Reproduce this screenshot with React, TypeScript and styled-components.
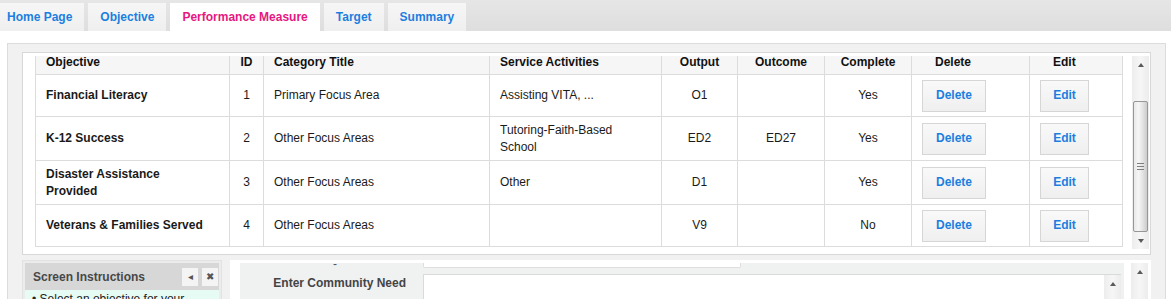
import React from 'react';
import styled, { createGlobalStyle } from 'styled-components';

const border_grey = '#dcdcdc';
const link_blue = '#1c7fe0';
const active_pink = '#e8177f';
const panel_grey = '#f1f1f1';

const GlobalStyle = createGlobalStyle`
  html, body {
    margin: 0;
    padding: 0;
    background: #ffffff;
    font-family: "Liberation Sans", Arial, sans-serif;
    font-size: 12px;
    color: #1a1a1a;
    overflow: hidden;
  }
`;

type Row = {
  objective: string;
  id: number;
  category: string;
  activities: string;
  output: string;
  outcome: string;
  complete: string;
};

const rows: Row[] = [
  { objective: 'Financial Literacy', id: 1, category: 'Primary Focus Area', activities: 'Assisting VITA, ...', output: 'O1', outcome: '', complete: 'Yes' },
  { objective: 'K-12 Success', id: 2, category: 'Other Focus Areas', activities: 'Tutoring-Faith-Based School', output: 'ED2', outcome: 'ED27', complete: 'Yes' },
  { objective: 'Disaster Assistance Provided', id: 3, category: 'Other Focus Areas', activities: 'Other', output: 'D1', outcome: '', complete: 'Yes' },
  { objective: 'Veterans & Families Served', id: 4, category: 'Other Focus Areas', activities: '', output: 'V9', outcome: '', complete: 'No' },
];

const tabs = ['Home Page', 'Objective', 'Performance Measure', 'Target', 'Summary'];

const columns = [
  { title: 'Objective', width: 194, align: 'left' },
  { title: 'ID', width: 34, align: 'center' },
  { title: 'Category Title', width: 226, align: 'left' },
  { title: 'Service Activities', width: 172, align: 'left' },
  { title: 'Output', width: 76, align: 'center' },
  { title: 'Outcome', width: 87, align: 'center' },
  { title: 'Complete', width: 87, align: 'center' },
  { title: 'Delete', width: 118, align: 'left' },
  { title: 'Edit', width: 93, align: 'left' },
];

const Scrollbar = ({ thumbOffset, thumbHeight }: { thumbOffset?: number; thumbHeight?: number }) => (
  <ScrollTrack>
    <ArrowButton>
      <ArrowUp />
    </ArrowButton>
    <ThumbArea>
      {thumbHeight ? (
        <Thumb style={{ marginTop: thumbOffset, height: thumbHeight }}>
          <Grip />
          <Grip />
          <Grip />
        </Thumb>
      ) : null}
    </ThumbArea>
    {thumbHeight ? (
      <ArrowButton>
        <ArrowDown />
      </ArrowButton>
    ) : null}
  </ScrollTrack>
);

export default function App() {
  return (
    <>
      <GlobalStyle />
      <TabBar>
        <TabList>
          {tabs.map((t) => (
            <Tab key={t} $active={t === 'Performance Measure'}>
              {t}
            </Tab>
          ))}
        </TabList>
      </TabBar>

      <Page>
        <OuterPanel>
          <GridBox>
            <Table>
              <colgroup>
                {columns.map((c) => (
                  <col key={c.title} style={{ width: c.width }} />
                ))}
              </colgroup>
              <thead>
                <tr>
                  {columns.map((c) => (
                    <HeadCell key={c.title} $align={c.align} $action={c.title === 'Delete' || c.title === 'Edit'}>
                      {c.title}
                    </HeadCell>
                  ))}
                </tr>
              </thead>
              <tbody>
                {rows.map((r) => (
                  <BodyRow key={r.id}>
                    <ObjectiveCell>{r.objective}</ObjectiveCell>
                    <Cell $align="center">{r.id}</Cell>
                    <Cell>{r.category}</Cell>
                    <Cell $wrap>{r.activities}</Cell>
                    <Cell $align="center">{r.output}</Cell>
                    <Cell $align="center">{r.outcome}</Cell>
                    <Cell $align="center">{r.complete}</Cell>
                    <Cell>
                      <ActionButton $width={64}>Delete</ActionButton>
                    </Cell>
                    <Cell>
                      <ActionButton $width={49}>Edit</ActionButton>
                    </Cell>
                  </BodyRow>
                ))}
              </tbody>
            </Table>
            <Scrollbar thumbOffset={28} thumbHeight={131} />
          </GridBox>

          <BottomSection>
            <InstructionsPanel>
              <InstructionsHeader>
                <InstructionsTitle>Screen Instructions</InstructionsTitle>
                <HeaderButton>◂</HeaderButton>
                <HeaderButton>✖</HeaderButton>
              </InstructionsHeader>
              <InstructionsBody>• Select an objective for your</InstructionsBody>
            </InstructionsPanel>

            <FormPanel>
              <FormArea>
                <CutBoxRow>
                  <CutLabel>-</CutLabel>
                  <CutBox />
                </CutBoxRow>
                <FieldRow>
                  <FieldLabel>Enter Community Need</FieldLabel>
                  <TextArea>
                    <TextAreaSpace />
                    <Scrollbar />
                  </TextArea>
                </FieldRow>
              </FormArea>
              <Scrollbar />
            </FormPanel>
          </BottomSection>
        </OuterPanel>
      </Page>
    </>
  );
}

const TabBar = styled.div`
  height: 31px;
  padding-top: 3px;
  box-sizing: border-box;
  background: linear-gradient(#e6e6e6, #dedede);
  overflow: hidden;
`;

const TabList = styled.div`
  display: flex;
  gap: 4px;
  margin-left: -5px;
  height: 28px;
`;

const Tab = styled.div<{ $active?: boolean }>`
  height: 28px;
  padding: 0 12px;
  display: flex;
  align-items: center;
  font-weight: bold;
  font-size: 12px;
  color: ${(p) => (p.$active ? active_pink : link_blue)};
  background: ${(p) => (p.$active ? '#ffffff' : 'linear-gradient(#f6f6f6, #efefef)')};
`;

const Page = styled.div`
  padding: 12px 5px 0 7px;
`;

const OuterPanel = styled.div`
  border: 1px solid ${border_grey};
  background: ${panel_grey};
  padding: 8px 14px 0 14px;
  height: 300px;
`;

const GridBox = styled.div`
  display: flex;
  align-items: flex-start;
  gap: 9px;
  background: #ffffff;
  border: 1px solid #d8d8d8;
  padding: 3px 2px 5px 12px;
`;

const Table = styled.table`
  width: 1087px;
  table-layout: fixed;
  border-collapse: collapse;
  border: 1px solid ${border_grey};
  border-top: none;
`;

const HeadCell = styled.th<{ $align: string; $action?: boolean }>`
  height: 18px;
  padding: 0 10px 0 ${(p) => (p.$action ? '23px' : '10px')};
  text-align: ${(p) => (p.$action ? 'left' : p.$align)};
  vertical-align: top;
  line-height: 12px;
  font-weight: bold;
  color: #111;
  background: #f6f6f6;
  border-left: 1px solid ${border_grey};
  border-bottom: 1px solid ${border_grey};
  box-sizing: border-box;
`;

const BodyRow = styled.tr`
  border-top: 1px solid ${border_grey};
`;

const Cell = styled.td<{ $align?: string; $wrap?: boolean }>`
  padding: 5px ${(p) => (p.$wrap ? '20px' : '10px')} 4px 10px;
  text-align: ${(p) => p.$align ?? 'left'};
  vertical-align: middle;
  line-height: 17px;
  border-left: 1px solid ${border_grey};
  color: #1a1a1a;
`;

const ObjectiveCell = styled(Cell)`
  padding-right: 20px;
  font-weight: bold;
`;

const ActionButton = styled.div<{ $width: number }>`
  width: ${(p) => p.$width}px;
  height: 32px;
  box-sizing: border-box;
  display: flex;
  align-items: center;
  justify-content: center;
  border: 1px solid #d6d6d6;
  background: linear-gradient(#f9f9f9, #efefef);
  color: ${link_blue};
  font-weight: bold;
`;

const ScrollTrack = styled.div`
  width: 17px;
  align-self: stretch;
  display: flex;
  flex-direction: column;
  background: linear-gradient(90deg, #ededed, #f6f6f6 50%, #ececec);
  flex-shrink: 0;
`;

const ArrowButton = styled.div`
  height: 17px;
  display: flex;
  align-items: center;
  justify-content: center;
`;

const ArrowUp = styled.div`
  width: 0;
  height: 0;
  border-left: 3.5px solid transparent;
  border-right: 3.5px solid transparent;
  border-bottom: 4px solid #5a5a5a;
`;

const ArrowDown = styled(ArrowUp)`
  border-bottom: none;
  border-top: 4px solid #5a5a5a;
`;

const ThumbArea = styled.div`
  flex: 1;
  display: flex;
  flex-direction: column;
  align-items: center;
`;

const Thumb = styled.div`
  width: 15px;
  box-sizing: border-box;
  border: 1px solid #979797;
  border-radius: 2px;
  background: linear-gradient(90deg, #e8e8e8, #f6f6f6 35%, #dedede 75%, #cbcbcb);
  display: flex;
  flex-direction: column;
  align-items: center;
  justify-content: center;
  gap: 2px;
`;

const Grip = styled.div`
  width: 7px;
  height: 1px;
  background: #7d7d7d;
`;

const BottomSection = styled.div`
  display: flex;
  gap: 8px;
  margin-top: 5px;
`;

const InstructionsPanel = styled.div`
  width: 200px;
  box-sizing: border-box;
  background: #ececec;
  border: 1px solid #e2e2e2;
  padding: 2px;
  height: 60px;
`;

const InstructionsHeader = styled.div`
  height: 27px;
  display: flex;
  align-items: center;
  gap: 4px;
  padding: 0 1px 0 8px;
  background: #d7d7d7;
`;

const InstructionsTitle = styled.div`
  flex: 1;
  font-weight: bold;
  font-size: 12px;
  color: #474747;
`;

const HeaderButton = styled.div`
  width: 16px;
  height: 18px;
  display: flex;
  align-items: center;
  justify-content: center;
  background: #f4f4f4;
  color: #555;
  font-size: 10px;
`;

const InstructionsBody = styled.div`
  background: #e6fbf4;
  padding: 2px 7px;
  line-height: 14px;
  color: #222;
`;

const FormPanel = styled.div`
  flex: 1;
  display: flex;
  gap: 7px;
  background: #ffffff;
  padding: 3px 3px 0 10px;
  height: 60px;
`;

const FormArea = styled.div`
  flex: 1;
  background: #f0f1f1;
  padding-right: 3px;
`;

const CutBoxRow = styled.div`
  display: flex;
  height: 5px;
`;

const CutLabel = styled.div`
  width: 183px;
  padding-left: 93px;
  box-sizing: border-box;
  line-height: 2px;
  font-size: 12px;
  color: #555;
  overflow: hidden;
`;

const CutBox = styled.div`
  width: 318px;
  box-sizing: border-box;
  background: #ffffff;
  border: 1px solid #dedede;
  border-top: none;
  border-radius: 0 0 2px 2px;
`;

const FieldRow = styled.div`
  display: flex;
  margin-top: 6px;
`;

const FieldLabel = styled.div`
  width: 183px;
  box-sizing: border-box;
  padding-right: 17px;
  text-align: right;
  line-height: 18px;
  font-weight: bold;
  color: #444;
`;

const TextArea = styled.div`
  flex: 1;
  height: 40px;
  display: flex;
  background: #ffffff;
  border: 1px solid #dadada;
  border-right: none;
`;

const TextAreaSpace = styled.div`
  flex: 1;
`;
